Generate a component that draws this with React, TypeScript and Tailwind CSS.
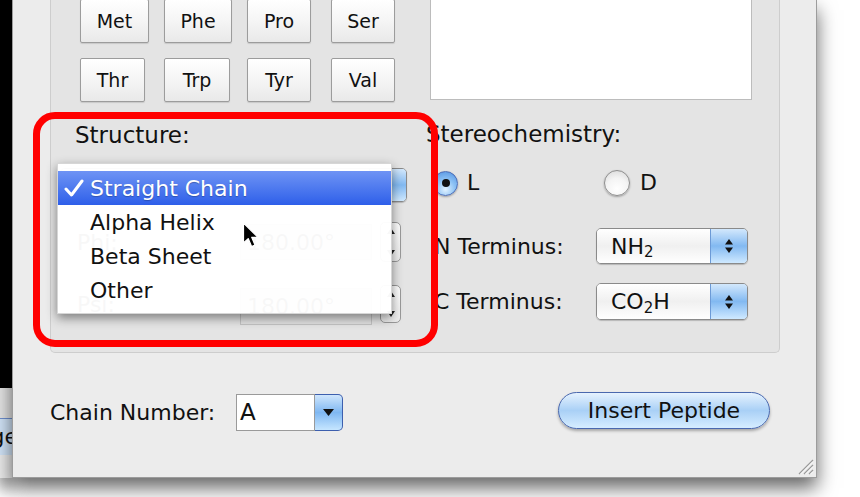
import React from 'react';

const FONT = "font-['DejaVu_Sans','Liberation_Sans',sans-serif]";

const aminoRows = [
  [
    { label: 'Met', w: 'w-[69px]' },
    { label: 'Phe', w: 'w-[68px]' },
    { label: 'Pro', w: 'w-[64px]' },
    { label: 'Ser', w: 'w-[64px]' },
  ],
  [
    { label: 'Thr', w: 'w-[65px]' },
    { label: 'Trp', w: 'w-[66px]' },
    { label: 'Tyr', w: 'w-[64px]' },
    { label: 'Val', w: 'w-[64px]' },
  ],
];

const menuItems = ['Straight Chain', 'Alpha Helix', 'Beta Sheet', 'Other'];

const UpDown = () => (
  <svg width="10" height="18" viewBox="0 0 10 18">
    <path d="M5 2 L9 7.5 H1 Z" fill="#111" />
    <path d="M5 16 L9 10.5 H1 Z" fill="#111" />
  </svg>
);

const PopUp: React.FC<{ children: React.ReactNode; className?: string }> = ({ children, className = '' }) => (
  <div
    className={`flex rounded-[5px] border border-[#8a8a8a] overflow-hidden shadow-[0_1px_1px_rgba(0,0,0,0.2)] ${className}`}
  >
    <div className="flex-1 flex items-center pl-[14px] text-[22px] text-[#111] bg-gradient-to-b from-white via-[#f0f0f0] to-white">
      {children}
    </div>
    <div className="w-[37px] flex items-center justify-center border-l border-[#6c9ad6] bg-gradient-to-b from-[#d3e8fc] via-[#82b9f1] to-[#cfe9ff]">
      <UpDown />
    </div>
  </div>
);

const Stepper: React.FC<{ className?: string }> = ({ className = '' }) => (
  <div
    className={`w-[21px] rounded-[5px] border border-[#9a9a9a] bg-gradient-to-b from-white to-[#ececec] flex flex-col items-center justify-between py-[5px] ${className}`}
  >
    <svg width="8" height="6" viewBox="0 0 8 6">
      <path d="M4 0 L8 6 H0 Z" fill="#222" />
    </svg>
    <svg width="8" height="6" viewBox="0 0 8 6">
      <path d="M4 6 L8 0 H0 Z" fill="#222" />
    </svg>
  </div>
);

export default function App() {
  return (
    <div className={`relative w-[860px] h-[497px] overflow-hidden bg-white ${FONT}`}>
      <div className="flex">
        {/* window behind, left edge */}
        <div className="w-[12px] h-[478px] flex flex-col shadow-[0_10px_16px_rgba(0,0,0,0.55)]">
          <div className="h-[388px] bg-black" />
          <div className="h-[30px] bg-[#e6e6e6]" />
          <div className="h-[37px] bg-[#d2e5f9] border-t border-[#6f90d0] flex items-center justify-end overflow-hidden">
            <span className="text-[22px] leading-none text-[#111] -mr-[6px]">ge</span>
          </div>
          <div className="flex-1 bg-[#ececec]" />
        </div>

        {/* Peptide window */}
        <div className="relative w-[805px] h-[478px] bg-[#ececec] border-l border-r border-b border-[#9c9c9c] shadow-[0_10px_18px_rgba(0,0,0,0.6)] text-[#111]">
          {/* group box */}
          <div className="ml-[37px] w-[730px] h-[353px] flex bg-[#e4e4e4] border-x border-b border-[#cdcdcd] rounded-b-[5px]">
            {/* left column */}
            <div className="w-[379px] flex flex-col">
              <div className="-mt-px pl-[29px] grid grid-cols-[84px_83px_84px_64px] gap-y-[15px]">
                {aminoRows.flat().map((a) => (
                  <div
                    key={a.label}
                    className={`${a.w} h-[44px] flex items-center justify-center rounded-[2px] border border-[#9c9c9c] bg-gradient-to-b from-white via-[#f5f5f5] to-[#e9e9e9] shadow-[0_1px_1px_rgba(0,0,0,0.12)] text-[19px]`}
                  >
                    {a.label}
                  </div>
                ))}
              </div>

              <div className="mt-[20px] h-[26px] leading-[26px] pl-[24px] text-[23px]">Structure:</div>

              {/* structure popup, mostly hidden by the open menu */}
              <PopUp className="mt-[20px] ml-[9px] w-[347px] h-[34px]">Straight Chain</PopUp>

              <div className="mt-[20px] h-[40px] flex items-center">
                <span className="w-[189px] pl-[26px] text-[22px]">Phi:</span>
                <div className="w-[132px] h-[36px] bg-[#e2e2e2] border border-[#c4c4c4] flex items-center pl-[6px] text-[22px]">
                  180.00°
                </div>
                <Stepper className="ml-[8px] h-[40px]" />
              </div>

              <div className="mt-[23px] h-[38px] flex items-center">
                <span className="w-[189px] pl-[26px] text-[22px]">Psi:</span>
                <div className="w-[132px] h-[37px] mt-[4px] bg-[#e2e2e2] border border-[#c4c4c4] flex items-center pl-[6px] text-[22px]">
                  180.00°
                </div>
                <Stepper className="ml-[8px] h-[38px]" />
              </div>
            </div>

            {/* right column */}
            <div className="w-[349px] flex flex-col">
              <div className="-mt-px w-[322px] h-[101px] bg-white border-x border-b border-[#bcbcbc]" />

              <div className="mt-[21px] h-[26px] leading-[26px] -ml-[4px] text-[23px]">Stereochemistry:</div>

              <div className="mt-[23px] h-[26px] flex items-center pl-[3px]">
                <div className="w-[171px] flex items-center gap-[9px]">
                  <span className="w-[25px] h-[25px] rounded-full border border-[#4b6cb6] bg-[radial-gradient(circle_at_50%_75%,#e2f2ff_0%,#8ec3f5_45%,#4f8fe0_100%)] flex items-center justify-center shadow-[0_1px_2px_rgba(0,0,0,0.3)]">
                    <span className="w-[8px] h-[8px] rounded-full bg-[#111]" />
                  </span>
                  <span className="text-[22px] leading-none">L</span>
                </div>
                <div className="flex items-center gap-[10px]">
                  <span className="w-[26px] h-[26px] rounded-full border border-[#8e8e8e] bg-[radial-gradient(circle_at_50%_75%,#ffffff_0%,#f4f4f4_50%,#d6d6d6_100%)] shadow-[0_1px_2px_rgba(0,0,0,0.3)]" />
                  <span className="text-[22px] leading-none">D</span>
                </div>
              </div>

              <div className="mt-[32px] h-[36px] flex items-center">
                <span className="w-[166px] pl-[4px] text-[22px]">N Terminus:</span>
                <PopUp className="w-[152px] h-[36px]">
                  <span>
                    NH<sub className="text-[15px]">2</sub>
                  </span>
                </PopUp>
              </div>

              <div className="mt-[19px] h-[37px] flex items-center">
                <span className="w-[166px] pl-[4px] text-[22px]">C Terminus:</span>
                <PopUp className="w-[152px] h-[37px]">
                  <span>
                    CO<sub className="text-[15px]">2</sub>H
                  </span>
                </PopUp>
              </div>
            </div>
          </div>

          {/* bottom row */}
          <div className="mt-[41px] ml-[37px] mr-[46px] flex items-center">
            <span className="w-[186px] text-[22px]">Chain Number:</span>
            <div className="h-[37px] flex">
              <div className="w-[79px] bg-white border border-[#9a9a9a] flex items-center pl-[3px] text-[23px]">A</div>
              <div className="w-[28px] flex items-center justify-center rounded-r-[5px] border border-l-0 border-[#3d5fae] bg-gradient-to-b from-[#cfe6fc] via-[#7fb7f1] to-[#c6e6ff]">
                <svg width="11" height="7" viewBox="0 0 11 7">
                  <path d="M0 0 H11 L5.5 7 Z" fill="#111" />
                </svg>
              </div>
            </div>
            <div className="ml-auto -mt-[4px] w-[212px] h-[37px] rounded-full border border-[#4a68ae] bg-gradient-to-b from-[#e6f2fe] via-[#a9d0f6] to-[#d6edff] shadow-[0_2px_3px_rgba(0,0,0,0.3)] flex items-center justify-center text-[22px]">
              Insert Peptide
            </div>
          </div>

          {/* resize grip */}
          <svg className="absolute right-[2px] bottom-[2px]" width="18" height="18" viewBox="0 0 18 18">
            <path d="M17 3 L3 17 M17 8 L8 17 M17 13 L13 17" stroke="#9a9a9a" strokeWidth="1.3" />
            <path d="M17 4.5 L4.5 17 M17 9.5 L9.5 17 M17 14.5 L14.5 17" stroke="#ffffff" strokeWidth="0.8" />
          </svg>
        </div>
      </div>

      {/* open popup menu */}
      <div className="absolute left-[57px] top-[163px] w-[335px] h-[151px] pt-[7px] bg-white/[0.97] shadow-[0_4px_10px_rgba(0,0,0,0.45)] border border-[#d6d6d6]">
        {menuItems.map((item, i) => (
          <div
            key={item}
            className={`h-[34px] flex items-center text-[22px] ${
              i === 0
                ? 'bg-gradient-to-b from-[#6f93f4] to-[#2e5ee9] text-white [text-shadow:0_1px_1px_rgba(0,0,0,0.25)]'
                : 'text-[#111]'
            }`}
          >
            <span className="w-[32px] pl-[6px] flex items-center">
              {i === 0 && (
                <svg width="20" height="18" viewBox="0 0 20 18">
                  <path d="M2 10 L7.5 16 L18 2" fill="none" stroke="#fff" strokeWidth="3" strokeLinecap="round" strokeLinejoin="round" />
                </svg>
              )}
            </span>
            {item}
          </div>
        ))}
      </div>

      {/* mouse pointer */}
      <svg className="absolute left-[242px] top-[222px]" width="18" height="27" viewBox="0 0 18 27">
        <path
          d="M1.5 1 L1.5 21 L6.2 16.6 L9.6 24.6 L13 23.1 L9.7 15.3 L16 15.3 Z"
          fill="#000"
          stroke="#fff"
          strokeWidth="1.2"
          strokeLinejoin="round"
        />
      </svg>

      {/* red highlight ring */}
      <div className="absolute left-[33px] top-[112px] w-[405px] h-[235px] border-[7px] border-[#ff0000] rounded-[22px]" />
    </div>
  );
}
